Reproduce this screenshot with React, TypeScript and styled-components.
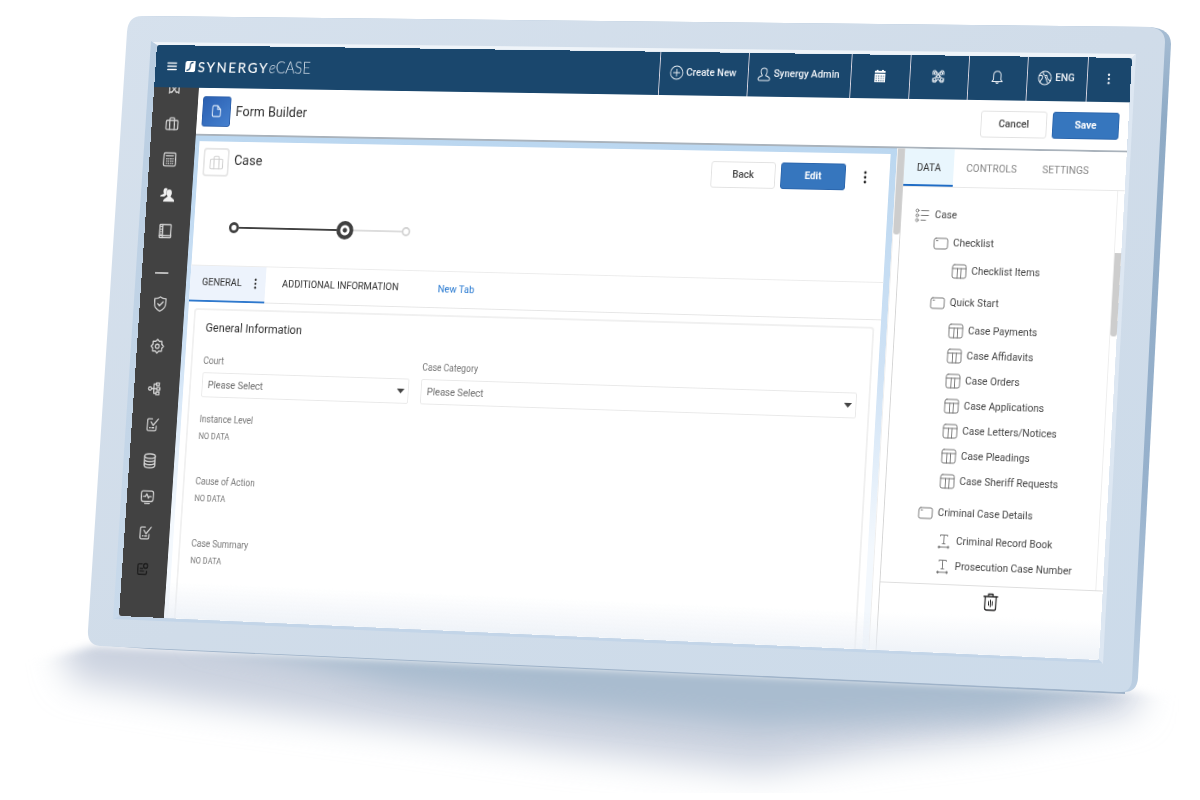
import React, { useEffect, useRef, useState } from "react";
import styled, { createGlobalStyle, css } from "styled-components";

/* ---------- perspective of the monitor ---------- */

const SCREEN_W = 1120;
const SCREEN_H = 620;
const STAGE_W = 1200;

/* Corners of the glass on a 1200-unit wide stage: TL, TR, BR, BL */
const CORNERS = [
  [157, 45],
  [1132, 58],
  [1099, 660],
  [119, 616],
];

function screenMatrix(scale: number): string {
  const [[x0, y0], [x1, y1], [x2, y2], [x3, y3]] = CORNERS.map(([x, y]) => [
    x * scale,
    y * scale,
  ]);
  const sx = x0 - x1 + x2 - x3;
  const sy = y0 - y1 + y2 - y3;
  const dx1 = x1 - x2;
  const dy1 = y1 - y2;
  const dx2 = x3 - x2;
  const dy2 = y3 - y2;
  const det = dx1 * dy2 - dx2 * dy1;
  const g = (sx * dy2 - dx2 * sy) / det;
  const h = (dx1 * sy - sx * dy1) / det;
  const a = x1 - x0 + g * x1;
  const b = x3 - x0 + h * x3;
  const d = y1 - y0 + g * y1;
  const e = y3 - y0 + h * y3;
  const m = [
    a / SCREEN_W, d / SCREEN_W, 0, g / SCREEN_W,
    b / SCREEN_H, e / SCREEN_H, 0, h / SCREEN_H,
    0, 0, 1, 0,
    x0, y0, 0, 1,
  ];
  return `matrix3d(${m.map((n) => n.toFixed(10)).join(",")})`;
}

/* ---------- styles ---------- */

const GlobalStyle = createGlobalStyle`
  * { box-sizing: border-box; }
  body { margin: 0; background: #fff; }
  button, select { font: inherit; color: inherit; }
  h1, h2, h3, p, ul, dl, dd, dt { margin: 0; padding: 0; font-weight: inherit; }
`;

const Stage = styled.div`
  position: relative;
  width: 100%;
  aspect-ratio: 3 / 2;
  overflow: hidden;
  background: #fff;
`;

const Device = styled.svg`
  display: block;
  width: 100%;
  height: 100%;
`;

const Screen = styled.div`
  position: absolute;
  top: 0;
  left: 0;
  width: ${SCREEN_W}px;
  height: ${SCREEN_H}px;
  transform-origin: 0 0;
  overflow: hidden;
  border-radius: 3px;
  display: flex;
  flex-direction: column;
  background: #fff;
  color: #3a3a3a;
  font-family: Roboto, "Liberation Sans", sans-serif;
  font-size: 11px;
  line-height: 14px;
`;

const TopBar = styled.header`
  flex: none;
  height: 46px;
  display: flex;
  justify-content: space-between;
  background: #1a476d;
  color: #f2f5f9;
`;

const Brand = styled.div`
  display: flex;
  align-items: center;
  padding: 0 0 1px 14px;
`;

const MenuButton = styled.button`
  display: flex;
  padding: 0;
  margin-right: 10px;
  border: 0;
  background: none;
  color: #fff;
`;

const BrandName = styled.span`
  margin-left: 3px;
  font-family: Lato, sans-serif;
  font-size: 16px;
  line-height: 20px;
  letter-spacing: 2px;
  font-weight: 500;
  color: #fff;
`;

const BrandProduct = styled.span`
  font-family: Lato, sans-serif;
  font-size: 17px;
  line-height: 20px;
  font-weight: 300;
  color: #dbe4ee;

  em { font-weight: 300; }
`;

const TopActions = styled.nav`
  display: flex;
`;

const TopAction = styled.button<{ $width: number }>`
  width: ${(p) => p.$width}px;
  display: flex;
  align-items: center;
  justify-content: center;
  gap: 3px;
  padding: 0 2px 2px 0;
  border: 0;
  border-left: 1px solid #d9d6e2;
  background: none;
  font-weight: 500;
  white-space: nowrap;
`;

const Body = styled.div`
  flex: 1;
  min-height: 0;
  display: flex;
`;

const SideNav = styled.nav`
  flex: none;
  width: 54px;
  padding-right: 6px;
  overflow: hidden;
  background: #424242;
  color: #d5d5d5;
`;

const SideList = styled.ul`
  list-style: none;
  margin-top: -19px;
`;

const SideItem = styled.li<{ $tall?: boolean }>`
  height: ${(p) => (p.$tall ? 53 : 39)}px;
  display: flex;
  align-items: center;
  justify-content: center;
`;

const SideButton = styled.button<{ $dark?: boolean }>`
  display: flex;
  padding: 0;
  border: 0;
  background: none;
  ${(p) => p.$dark && css`color: #1c1c1c;`}
`;

const SideRule = styled.li`
  width: 16px;
  height: 2px;
  margin: 25px auto 13px;
  background: #bdbdbd;
`;

const Main = styled.main`
  flex: 1;
  min-width: 0;
  display: flex;
  flex-direction: column;
`;

const TitleBar = styled.div`
  flex: none;
  height: 52px;
  display: flex;
  align-items: center;
  gap: 6px;
  padding: 0 10px 0 6px;
  border-bottom: 2px solid #a9b2bb;
`;

const AppTile = styled.span`
  width: 34px;
  height: 33px;
  display: flex;
  align-items: center;
  justify-content: center;
  border-radius: 3px;
  border: 1px solid #2c5faa;
  background: linear-gradient(135deg, #2a5fb0, #4580cf);
  color: #e4eefb;
`;

const Heading = styled.h1`
  flex: 1;
  font-size: 15px;
  line-height: 20px;
  color: #333;
`;

const Button = styled.button<{ $primary?: boolean }>`
  width: 73px;
  height: 28px;
  padding: 0;
  border-radius: 3px;
  border: 1px solid ${(p) => (p.$primary ? "#2b66ad" : "#e2e2e2")};
  background: ${(p) => (p.$primary ? "#3676be" : "#fff")};
  color: ${(p) => (p.$primary ? "#fff" : "#444")};
  font-weight: ${(p) => (p.$primary ? 700 : 500)};
`;

const Workspace = styled.div`
  flex: 1;
  min-height: 0;
  display: flex;
`;

const Canvas = styled.div`
  flex: 1;
  min-width: 0;
  display: flex;
  padding: 6px 7px 0 5px;
  background: linear-gradient(#bbd7f0, #cfe2f5 45%, #f3f8fd 80%);
`;

const Panel = styled.section`
  flex: 1;
  min-width: 0;
  display: flex;
  flex-direction: column;
  background: #fff;
`;

const PanelHead = styled.div`
  flex: none;
  height: 48px;
  display: flex;
  align-items: flex-start;
  gap: 6px;
  padding: 7px 25px 0 6px;
`;

const PanelHeading = styled(Heading)`
  line-height: 26px;
`;

const PanelActions = styled.div`
  display: flex;
  align-items: center;
  gap: 6px;
  padding-top: 4px;
`;

const CaseTile = styled.span`
  width: 31px;
  height: 31px;
  display: flex;
  align-items: center;
  justify-content: center;
  border: 2px solid #e6e6e6;
  border-radius: 4px;
  color: #cfcfcf;
`;

const IconButton = styled.button<{ $indent?: boolean }>`
  display: flex;
  margin-left: ${(p) => (p.$indent ? 14 : 0)}px;
  padding: 0;
  border: 0;
  background: none;
  color: #222;
`;

const Progress = styled.div`
  flex: none;
  height: 86px;
  display: flex;
  align-items: center;
  padding: 4px 0 0 42px;
`;

const StepDot = styled.span<{ $state: "done" | "current" | "next" }>`
  display: flex;
  border-radius: 50%;
  background: #fff;
  ${(p) => p.$state === "done" && css`width: 12px; height: 12px; border: 3px solid #404040;`}
  ${(p) => p.$state === "next" && css`width: 10px; height: 10px; border: 2px solid #d2d2d2;`}
  ${(p) =>
    p.$state === "current" &&
    css`
      width: 20px;
      height: 20px;
      background: radial-gradient(circle, #404040 0 2px, #fff 3px 5px, #404040 6px);
    `}
`;

const StepLine = styled.span<{ $done?: boolean }>`
  width: ${(p) => (p.$done ? 116 : 57)}px;
  height: 2px;
  background: ${(p) => (p.$done ? "#404040" : "#dcdcdc")};
`;

const Tabs = styled.div`
  flex: none;
  height: 40px;
  display: flex;
  border-top: 1px solid #ececec;
  border-bottom: 1px solid #e6e6e6;
`;

const Tab = styled.button<{ $active?: boolean }>`
  display: flex;
  align-items: center;
  gap: 14px;
  margin-bottom: -1px;
  padding: 0 ${(p) => (p.$active ? 10 : 20)}px 1px ${(p) => (p.$active ? 14 : 20)}px;
  border: 0;
  border-bottom: 2px solid ${(p) => (p.$active ? "#2f79cd" : "transparent")};
  background: ${(p) => (p.$active ? "#edf3fc" : "none")};
  color: #2e2e2e;
  white-space: nowrap;
`;

const NewTab = styled.button`
  padding: 0;
  margin-left: 26px;
  border: 0;
  background: none;
  color: #2477d0;
`;

const Card = styled.section`
  flex: 1;
  margin: 7px 7px 0;
  padding: 10px 13px 0;
  border: 2px solid #f0f0f0;
  border-bottom: 0;
  border-radius: 4px 4px 0 0;
`;

const CardTitle = styled.h3`
  margin-bottom: 20px;
  font-size: 13px;
  line-height: 18px;
  color: #333;
`;

const FieldRow = styled.div`
  display: grid;
  grid-template-columns: minmax(0, 33fr) minmax(0, 67fr);
  gap: 14px;
  margin-bottom: 17px;
`;

const Field = styled.label`
  display: grid;
  gap: 5px;
  font-size: 10px;
  color: #757575;
`;

const SelectBox = styled.span`
  display: grid;
  align-items: center;

  > * { grid-area: 1 / 1; }
  > svg { justify-self: end; margin-right: 5px; pointer-events: none; }
`;

const Select = styled.select`
  appearance: none;
  width: 100%;
  height: 27px;
  padding: 0 20px 0 6px;
  border: 1px solid #e9e9e9;
  border-radius: 2px;
  background: #fff;
  font-size: 11px;
  color: #6a6a6a;
`;

const Facts = styled.dl`
  display: grid;
  grid-auto-rows: 31px;
  gap: 36px;
  color: #757575;

  dt { font-size: 10px; line-height: 14px; margin-bottom: 5px; }
  dd { font-size: 9px; line-height: 12px; }
`;

const ScrollTrack = styled.div<{ $start: number; $length: number }>`
  flex: none;
  width: 8px;
  padding-top: ${(p) => p.$start}px;
  background: #fff;
  border-left: 1px solid #eee;

  &::before {
    content: "";
    display: block;
    height: ${(p) => p.$length}px;
    border-radius: 0 0 3px 3px;
    background: #cdcdcd;
  }
`;

const DataPanel = styled.aside`
  flex: none;
  width: 245px;
  display: flex;
  flex-direction: column;
  border-left: 1px solid #d5d5d5;
  background: #fff;
`;

const DataTabs = styled.div`
  flex: none;
  height: 40px;
  display: flex;
  border-bottom: 1px solid #e8e8e8;
`;

const DataTab = styled.button<{ $active?: boolean }>`
  padding: 2px 14px 0;
  border: 0;
  border-bottom: 2px solid ${(p) => (p.$active ? "#1f6cc5" : "transparent")};
  background: ${(p) => (p.$active ? "#e9f6fd" : "none")};
  color: ${(p) => (p.$active ? "#333" : "#858585")};
`;

const TreeArea = styled.div`
  flex: 1;
  min-height: 0;
  display: flex;
`;

const Tree = styled.ul`
  flex: 1;
  list-style: none;
  padding: 16px 0 0 15px;
`;

const TreeRow = styled.li<{ $level: number; $spaced: boolean }>`
  height: 26px;
  display: flex;
  align-items: center;
  gap: 5px;
  margin-top: ${(p) => (p.$spaced ? 7 : 0)}px;
  margin-bottom: ${(p) => (p.$level < 2 ? 3 : 0)}px;
  padding-left: ${(p) => p.$level * 22}px;
  color: #444;
  white-space: nowrap;

  svg { flex: none; color: #777; }
`;

const PanelFoot = styled.footer`
  flex: none;
  height: 71px;
  display: flex;
  justify-content: center;
  align-items: flex-start;
  padding-top: 6px;
  border-top: 1px solid #dedede;
`;

const GlassFade = styled.div`
  position: absolute;
  left: 54px;
  right: 0;
  bottom: 0;
  height: 40px;
  pointer-events: none;
  background: linear-gradient(rgba(236, 240, 246, 0), rgba(234, 239, 246, 0.75));
`;

/* ---------- icons ---------- */

type IconProps = {
  w?: number;
  h?: number;
  box?: string;
  stroke?: number;
  children: React.ReactNode;
};

const Icon = ({ w = 17, h = 17, box = "0 0 24 24", stroke = 2, children }: IconProps) => (
  <svg
    width={w}
    height={h}
    viewBox={box}
    fill="none"
    stroke="currentColor"
    strokeWidth={stroke}
    strokeLinecap="round"
    strokeLinejoin="round"
    aria-hidden="true"
  >
    {children}
  </svg>
);

const Dots = ({ h = 14 }: { h?: number }) => (
  <svg width="4" height={h} viewBox="0 0 4 14" fill="currentColor" aria-hidden="true">
    <circle cx="2" cy="2" r="1.4" />
    <circle cx="2" cy="7" r="1.4" />
    <circle cx="2" cy="12" r="1.4" />
  </svg>
);

const Caret = () => (
  <svg width="9" height="5" viewBox="0 0 9 5" aria-hidden="true">
    <path d="M0 0h9L4.500 5z" fill="#444" />
  </svg>
);

const luggage = (
  <>
    <rect x="2" y="7" width="20" height="14" rx="2" />
    <path d="M8 21V4.500a1.500 1.500 0 0 1 1.500-1.500h5a1.500 1.500 0 0 1 1.500 1.500V21" />
  </>
);

const clipboardTick = (
  <>
    <path d="M12 3H6a2 2 0 0 0-2 2v14a2 2 0 0 0 2 2h11a2 2 0 0 0 2-2v-5" />
    <path d="m10 8 4 5 8-10M8 16.500h1M12 16.500h3" />
  </>
);

const sideIcons: { name: string; art: React.ReactNode; tall?: boolean; dark?: boolean }[] = [
  {
    name: "Parties",
    art: (
      <>
        <path d="M4 20V8a4 4 0 0 1 4-4h8a4 4 0 0 1 4 4v12l-3-2M4 20l3-2" />
        <circle cx="12" cy="10" r="3" />
        <path d="m8 19 4-5 4 5" />
      </>
    ),
  },
  { name: "Cases", art: luggage },
  {
    name: "Registry",
    art: (
      <>
        <rect x="2" y="2" width="20" height="20" rx="2" />
        <path d="M6 6.500h12" />
        <path d="M7 10v9M10.500 10v9M14 10v9M17.500 10v9" strokeDasharray="2 1.500" strokeLinecap="butt" />
      </>
    ),
  },
  {
    name: "People",
    art: (
      <g fill="#f0f0f0" stroke="none">
        <path d="M9 1C6 1 5 3 5 6c0 2 1 3 1 4-4 1-6 2-6 4h7l4-3c-1-2-1-6 1-8-1-1-1-2-3-2z" />
        <path d="M15 3c-3 0-4.500 2-4.500 5.500 0 2 1 4 2 5-1 3-7 3-7 8.500h19c0-5.500-6-5.500-7-8.500 1-1 2-3 2-5C19.500 5 18 3 15 3z" />
      </g>
    ),
  },
  {
    name: "Library",
    art: (
      <>
        <rect x="3" y="2" width="19" height="20" rx="1" />
        <path d="M8 2v20M5 5h1M5 9h1M5 13h1M5 17h1" />
        <path d="M3 19h19" />
      </>
    ),
  },
  {
    name: "Security",
    art: (
      <>
        <path d="M12 1.500C9 4 6 4 2.500 4v8c0 6 5 9 9.500 11 4.500-2 9.500-5 9.500-11V4C18 4 15 4 12 1.500z" />
        <path d="m8 12 3 3 6-6" />
      </>
    ),
  },
  {
    name: "Settings",
    tall: true,
    art: (
      <>
        <path d="m12 1.500 3 3 4.500 0v4.500l3 3-3 3v4.500H15l-3 3-3-3H4.500V15l-3-3 3-3V4.500H9z" />
        <circle cx="12" cy="12" r="3.200" />
      </>
    ),
  },
  {
    name: "Workflow",
    art: (
      <>
        <circle cx="4.500" cy="12" r="2.500" />
        <path d="M7 12h9M11 12V5h4M11 12v7h4" />
        <rect x="15" y="3" width="5" height="4" />
        <rect x="16" y="10" width="5" height="4" />
        <rect x="15" y="17" width="5" height="4" />
      </>
    ),
  },
  { name: "Tasks", art: clipboardTick },
  {
    name: "Database",
    art: (
      <>
        <ellipse cx="12" cy="5" rx="9" ry="3.500" />
        <path d="M3 5v14c0 2 4 3.500 9 3.500s9-1.500 9-3.500V5M3 10c0 2 4 3.500 9 3.500s9-1.500 9-3.500M3 14.500C3 16.500 7 18 12 18s9-1.500 9-3.500" />
      </>
    ),
  },
  {
    name: "Monitoring",
    art: (
      <>
        <rect x="2" y="3" width="20" height="16" rx="3" />
        <path d="M5.500 11.500H9l2-4 3 6.500 1-2.500h3.500M8 22h8" />
      </>
    ),
  },
  { name: "Reviews", art: clipboardTick },
  {
    name: "Reports",
    dark: true,
    art: (
      <>
        <path d="M11 4H6a2 2 0 0 0-2 2v12a2 2 0 0 0 2 2h11a2 2 0 0 0 2-2v-3M8 11h4M8 15h6" />
        <circle cx="17" cy="7" r="3.500" />
      </>
    ),
  },
];

const SideEntry = ({ name, art, tall, dark }: (typeof sideIcons)[number]) => (
  <SideItem $tall={tall}>
    <SideButton aria-label={name} $dark={dark}>
      <Icon w={17} h={17}>{art}</Icon>
    </SideButton>
  </SideItem>
);

type NodeKind = "root" | "group" | "table" | "text";

const treeArt: Record<NodeKind, React.ReactNode> = {
  root: (
    <Icon w={17} h={15} box="0 0 17 15" stroke={1}>
      <circle cx="2.500" cy="2.500" r="1.500" />
      <circle cx="2.500" cy="7.500" r="1.500" />
      <circle cx="2.500" cy="12.500" r="1.500" />
      <path d="M7 2.500h8M7 7.500h8M7 12.500h5" />
    </Icon>
  ),
  group: (
    <Icon w={17} h={13} box="0 0 17 13" stroke={1}>
      <rect x="1" y="1" width="15" height="11" rx="2" />
      <path d="M3.500 3.500h1.500" />
    </Icon>
  ),
  table: (
    <Icon w={17} h={16} box="0 0 17 16" stroke={1}>
      <rect x="1" y="1" width="15" height="14" rx="2" />
      <path d="M1 5h15M6.500 5v10M10.500 5v10" />
    </Icon>
  ),
  text: (
    <Icon w={17} h={16} box="0 0 17 16" stroke={1}>
      <path d="M4.500 2.500V1.500h8v1M8.500 1.500v9M7 10.500h3M3 14h11" />
      <path d="M3.500 13.500v1M13.500 13.500v1" strokeWidth="2" />
    </Icon>
  ),
};

const tree: { kind: NodeKind; level: number; label: string }[] = [
  { kind: "root", level: 0, label: "Case" },
  { kind: "group", level: 1, label: "Checklist" },
  { kind: "table", level: 2, label: "Checklist Items" },
  { kind: "group", level: 1, label: "Quick Start" },
  { kind: "table", level: 2, label: "Case Payments" },
  { kind: "table", level: 2, label: "Case Affidavits" },
  { kind: "table", level: 2, label: "Case Orders" },
  { kind: "table", level: 2, label: "Case Applications" },
  { kind: "table", level: 2, label: "Case Letters/Notices" },
  { kind: "table", level: 2, label: "Case Pleadings" },
  { kind: "table", level: 2, label: "Case Sheriff Requests" },
  { kind: "group", level: 1, label: "Criminal Case Details" },
  { kind: "text", level: 2, label: "Criminal Record Book" },
  { kind: "text", level: 2, label: "Prosecution Case Number" },
];

const facts = ["Instance Level", "Cause of Action", "Case Summary"];

/* ---------- monitor body and its shadow ---------- */

const Monitor = () => (
  <Device viewBox="0 0 1200 800" aria-hidden="true">
    <defs>
      <linearGradient id="face" x1="0" y1="0" x2="1" y2="1">
        <stop offset="0" stopColor="#d6e1ed" />
        <stop offset="0.5" stopColor="#d0dce9" />
        <stop offset="1" stopColor="#ccdbea" />
      </linearGradient>
      <linearGradient id="side" x1="0" y1="0" x2="0" y2="1">
        <stop offset="0" stopColor="#a9bfd5" />
        <stop offset="0.15" stopColor="#8fabc6" />
        <stop offset="0.7" stopColor="#97b1cc" />
        <stop offset="1" stopColor="#bccfe2" />
      </linearGradient>
      <linearGradient id="bevel" x1="0" y1="0" x2="0" y2="1">
        <stop offset="0" stopColor="#b9cde1" />
        <stop offset="1" stopColor="#c9daeb" />
      </linearGradient>
      <filter id="wide" x="-20%" y="-60%" width="140%" height="220%">
        <feGaussianBlur stdDeviation="17" />
      </filter>
      <filter id="near" x="-20%" y="-60%" width="140%" height="220%">
        <feGaussianBlur stdDeviation="13" />
      </filter>
      <filter id="edge" x="-20%" y="-60%" width="140%" height="220%">
        <feGaussianBlur stdDeviation="4" />
      </filter>
      <clipPath id="ground" clipPathUnits="userSpaceOnUse">
        <path d="M0 640 H1135 L1200 680 V800 H0z" />
      </clipPath>
      <mask id="horizon">
        <path
          d="M-40 680 L30 662 L95 646 L1135 692 L1160 696 L1240 708 V840 H-40z"
          fill="#fff"
          filter="url(#edge)"
        />
      </mask>
    </defs>
    <g mask="url(#horizon)">
      <path
        d="M55 600 L1140 640 L1138 712 L1000 738 L880 752 L760 772 L560 750 L400 728 L200 702 L70 680z"
        fill="#cbd2df"
        filter="url(#wide)"
      />
      <path
        d="M190 560 L1120 620 L1110 690 L1000 716 L760 726 L560 706 L400 686 L300 662 L200 640z"
        fill="#a9bccf"
        filter="url(#near)"
      />
    </g>
    <path d="M98 645 L1125 692 L1125 694 L150 649z" fill="#9fb3c9" />
    <path
      d="M144 16 L1150 27 Q1171 29 1171 44 L1138 678 Q1137 692 1124 692 L1100 690z"
      fill="url(#side)"
    />
    <path
      d="M142 16 L1150 27 Q1165 29 1165 42 L1132 680 Q1131 692 1120 692 L100 646 Q87 645 88 630 L127 32 Q128 16 142 16z"
      fill="url(#face)"
    />
    <path d="M152 42 L1136 54 L1132 58 L157 45z" fill="#eff4f9" />
    <path d="M151 41 L157 45 L119 616 L113 620z" fill="url(#bevel)" />
    <path d="M1136 54 L1132 58 L1099 660 L1103 664z" fill="#dde7f2" />
    <path d="M114 619 L119 616 L1099 660 L1102 663z" fill="#c3d5e8" />
  </Device>
);

/* ---------- application ---------- */

export default function App() {
  const stage = useRef<HTMLDivElement>(null);
  const [scale, setScale] = useState(window.innerWidth / STAGE_W);

  useEffect(() => {
    const node = stage.current;
    if (!node) return;
    const fit = () => setScale(node.clientWidth / STAGE_W);
    fit();
    const observer = new ResizeObserver(fit);
    observer.observe(node);
    return () => observer.disconnect();
  }, []);

  return (
    <>
      <GlobalStyle />
      <Stage ref={stage}>
        <Monitor />
        <Screen style={{ transform: screenMatrix(scale) }}>
          <TopBar>
            <Brand>
              <MenuButton aria-label="Menu">
                <Icon w={12} h={10} box="0 0 12 10" stroke={1.4}>
                  <path d="M.8 1.500h10.400M.8 5h10.400M.8 8.500h10.400" />
                </Icon>
              </MenuButton>
              <svg width="12" height="12" viewBox="0 0 12 12" aria-hidden="true">
                <path d="M1.500 0H12v10.500L10.500 12H0V1.500z" fill="#fff" />
                <path d="M9.500 1.500C6 1.500 6 3 6 5.500S5.500 10 1.500 10.500" fill="none" stroke="#1a476d" strokeWidth="1.400" />
              </svg>
              <BrandName>SYNERGY</BrandName>
              <BrandProduct><em>e</em>CASE</BrandProduct>
            </Brand>
            <TopActions>
              <TopAction $width={101}>
                <Icon w={16} h={16} stroke={1.4}>
                  <circle cx="12" cy="12" r="10.500" />
                  <path d="M12 6.500v11M6.500 12h11" />
                </Icon>
                Create New
              </TopAction>
              <TopAction $width={116}>
                <Icon w={15} h={15} stroke={1.5}>
                  <path d="M12 1.500c-4 0-5.500 2.500-5.500 6 0 3 1.500 5 2.500 6.500-4 1.500-7.500 2.500-7.500 6 0 1.500 1 2.500 2.500 2.500h16c1.500 0 2.500-1 2.500-2.500 0-3.500-3.500-4.500-7.500-6 1-1.500 2.500-3.500 2.500-6.500 0-3.500-1.500-6-5.500-6z" />
                </Icon>
                Synergy Admin
              </TopAction>
              <TopAction $width={66} aria-label="Calendar">
                <svg width="14" height="15" viewBox="0 0 14 15" aria-hidden="true">
                  <path d="M1 2h2V1h2v1h4V1h2v1h2v12H1z" fill="#fff" />
                  <path
                    d="M1 4.500h12"
                    stroke="#1a476d"
                    strokeWidth="1"
                  />
                  <path
                    d="M2.500 7.500h9M2.500 10h9M2.500 12.500h9"
                    stroke="#1a476d"
                    strokeWidth="1.200"
                    strokeDasharray="1.200 1.400"
                  />
                </svg>
              </TopAction>
              <TopAction $width={65} aria-label="Assignments">
                <Icon w={16} h={16} stroke={1.6}>
                  <path d="M3 9V5a2 2 0 0 1 2-2h2l10 11M21 9V5a2 2 0 0 0-2-2h-2L7 14M3 15v4a2 2 0 0 0 2 2h3l3-4M21 15v4a2 2 0 0 1-2 2h-3l-3-4" />
                  <circle cx="7" cy="7" r="2" />
                  <circle cx="17" cy="7" r="2" />
                  <circle cx="6" cy="17" r="2.500" />
                  <circle cx="18" cy="17" r="2.500" />
                  <circle cx="12" cy="12" r="2.500" />
                </Icon>
              </TopAction>
              <TopAction $width={65} aria-label="Notifications">
                <Icon w={15} h={16} stroke={1.6}>
                  <path d="M12 2c-4.500 0-6.500 3-6.500 7v7L3 19h18l-2.500-3V9c0-4-2-7-6.500-7zM10 20.500c0 2.500 4 2.500 4 0" />
                </Icon>
              </TopAction>
              <TopAction $width={66}>
                <Icon w={16} h={16} stroke={1.5}>
                  <circle cx="12" cy="12" r="10.500" />
                  <path d="M2 9c4-3 7 0 6 3s-3 3-4 7M9 2c-1 5 3 7 6 6 0 4 2 7 6 8M12 10c2 2 2 5 5 10" />
                </Icon>
                ENG
              </TopAction>
              <TopAction $width={48} aria-label="More">
                <Dots h={12} />
              </TopAction>
            </TopActions>
          </TopBar>

          <Body>
            <SideNav aria-label="Modules">
              <SideList>
                {sideIcons.slice(0, 5).map((item) => (
                  <SideEntry key={item.name} {...item} />
                ))}
                <SideRule role="separator" />
                {sideIcons.slice(5).map((item) => (
                  <SideEntry key={item.name} {...item} />
                ))}
              </SideList>
            </SideNav>

            <Main>
              <TitleBar>
                <AppTile>
                  <Icon w={14} h={16} stroke={2}>
                    <path d="M4 4a2 2 0 0 1 2-2h8l6 7v11a2 2 0 0 1-2 2H6a2 2 0 0 1-2-2zM14 2v7h6" />
                  </Icon>
                </AppTile>
                <Heading>Form Builder</Heading>
                <Button>Cancel</Button>
                <Button $primary>Save</Button>
              </TitleBar>

              <Workspace>
                <Canvas>
                  <Panel>
                    <PanelHead>
                      <CaseTile>
                        <Icon w={18} h={18} stroke={1.6}>{luggage}</Icon>
                      </CaseTile>
                      <PanelHeading as="h2">Case</PanelHeading>
                      <PanelActions>
                        <Button>Back</Button>
                        <Button $primary>Edit</Button>
                        <IconButton $indent aria-label="More actions">
                          <Dots />
                        </IconButton>
                      </PanelActions>
                    </PanelHead>

                    <Progress>
                      <StepDot $state="done" />
                      <StepLine $done />
                      <StepDot $state="current" />
                      <StepLine />
                      <StepDot $state="next" />
                    </Progress>

                    <Tabs>
                      <Tab $active>
                        GENERAL
                        <Dots h={12} />
                      </Tab>
                      <Tab>ADDITIONAL INFORMATION</Tab>
                      <NewTab>New Tab</NewTab>
                    </Tabs>

                    <Card>
                      <CardTitle>General Information</CardTitle>
                      <FieldRow>
                        {["Court", "Case Category"].map((label) => (
                          <Field key={label}>
                            {label}
                            <SelectBox>
                              <Select defaultValue="">
                                <option value="">Please Select</option>
                              </Select>
                              <Caret />
                            </SelectBox>
                          </Field>
                        ))}
                      </FieldRow>
                      <Facts>
                        {facts.map((name) => (
                          <div key={name}>
                            <dt>{name}</dt>
                            <dd>NO DATA</dd>
                          </div>
                        ))}
                      </Facts>
                    </Card>
                  </Panel>
                </Canvas>
                <ScrollTrack $start={0} $length={90} />

                <DataPanel>
                  <DataTabs>
                    <DataTab $active>DATA</DataTab>
                    <DataTab>CONTROLS</DataTab>
                    <DataTab>SETTINGS</DataTab>
                  </DataTabs>
                  <TreeArea>
                    <Tree>
                      {tree.map((node, i) => (
                        <TreeRow
                          key={node.label}
                          $level={node.level}
                          $spaced={node.level === 1 && tree[i - 1].level === 2}
                        >
                          {treeArt[node.kind]}
                          {node.label}
                        </TreeRow>
                      ))}
                    </Tree>
                    <ScrollTrack $start={64} $length={86} />
                  </TreeArea>
                  <PanelFoot>
                    <IconButton aria-label="Delete">
                      <Icon w={17} h={19} box="0 0 17 19" stroke={1.3}>
                        <path d="M1 4h15M6 4V1.500h5V4M2.500 4v12a2 2 0 0 0 2 2h8a2 2 0 0 0 2-2V4" />
                        <path d="M6.500 9v4M8.500 7.500v7M10.500 9v4" strokeWidth="1" />
                      </Icon>
                    </IconButton>
                  </PanelFoot>
                </DataPanel>
              </Workspace>
            </Main>
          </Body>
          <GlassFade />
        </Screen>
      </Stage>
    </>
  );
}
